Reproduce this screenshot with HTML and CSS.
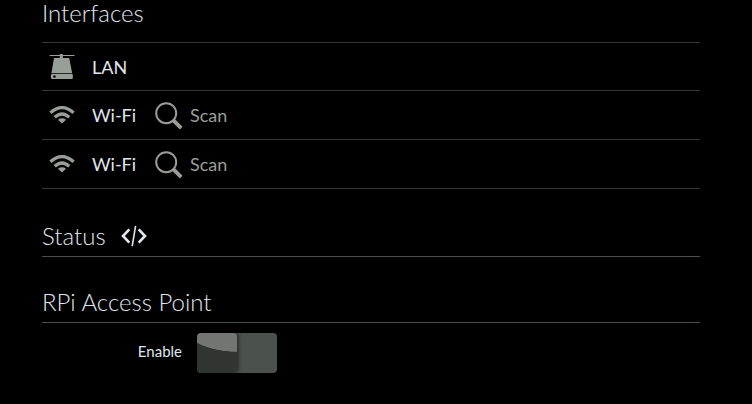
FILE: index.html
```
<!DOCTYPE html>
<html lang="en">
<head>
	<meta charset="UTF-8">
	<title>Network</title>
	<link rel="stylesheet" href="styles.css">
</head>
<body>
	<svg class="defs">
		<symbol id="i-wifi" viewBox="0 0 26 18">
			<path d="M1.4 6.8Q13-3.6 24.6 6.8M5.7 11.3Q13 4.7 20.3 11.3" fill="none" stroke="currentColor" stroke-width="3.2"/>
			<path d="M9 13.7Q13 10.8 17 13.7L13 17.5z" fill="currentColor"/>
		</symbol>
		<symbol id="i-search" viewBox="0 0 28 28">
			<circle cx="11.2" cy="11.2" r="10" fill="none" stroke="currentColor" stroke-width="2"/>
			<path d="M18.2 18.2L26.2 26.2" stroke="currentColor" stroke-width="3.8"/>
		</symbol>
	</svg>
	<div class="container">
		<h2 class="first">Interfaces</h2>
		<ul class="entries">
			<li>
				<svg class="lan" viewBox="0 0 26 26"><path d="M.5 1h10.3V0h3v1h11.7v1.1H13.8V4h6.4l3 15.3H2.4L5 4h5.8V2.1H.5z"/><path fill-rule="evenodd" d="M3 20.1h19.8q1 0 1 1v2.8q0 1-1 1H3q-1 0-1-1v-2.8q0-1 1-1zM5.4 21.2a1.3 1.3 0 1 0 .1 0z"/></svg>
				<b>LAN</b>
			</li>
			<li>
				<svg class="wifi"><use href="#i-wifi"/></svg>
				<b>Wi-Fi</b>
				<a class="scan"><svg class="search"><use href="#i-search"/></svg>Scan</a>
			</li>
			<li>
				<svg class="wifi"><use href="#i-wifi"/></svg>
				<b>Wi-Fi</b>
				<a class="scan"><svg class="search"><use href="#i-search"/></svg>Scan</a>
			</li>
		</ul>
		<h2 class="status">Status
			<svg class="code" viewBox="0 0 26 22"><path d="M8.3 4.3L2 11l6.3 6.7M17.7 4.3L24 11l-6.3 6.7"/><path class="slash" d="M14.6.8L11.2 21.2"/></svg>
		</h2>
		<h2 class="ap">RPi Access Point</h2>
		<div class="field">
			<label>Enable</label>
			<div class="switch"><div class="knob"></div></div>
		</div>
	</div>
</body>
</html>
```

FILE: styles.css
```
*{
	margin: 0;
	padding: 0;
	box-sizing: border-box;
}
body{
	background: #000;
	color: #e0e7ee;
	font-family: Lato, "Liberation Sans", sans-serif;
	overflow: hidden;
}
.defs{
	display: none;
}
.container{
	width: 658px;
	margin-left: 42px;
}
h2{
	display: flex;
	align-items: center;
	font-size: 24px;
	font-weight: 300;
	line-height: 30px;
	white-space: nowrap;
	border-bottom: 1px solid #4b514d;
}
.first{
	height: 43px;
	align-items: flex-start;
	line-height: 26px;
	border-color: #363636;
}
.entries{
	list-style: none;
}
.entries li{
	display: flex;
	align-items: center;
	height: 49px;
	padding-left: 7px;
	font-size: 18px;
	border-bottom: 1px solid #363636;
}
.entries li:first-child{
	height: 48px;
}
.entries b{
	font-weight: 400;
	line-height: 24px;
}
.entries svg{
	color: #989e98;
	fill: #989e98;
}
.lan{
	width: 26px;
	height: 26px;
	margin-right: 17px;
}
.wifi{
	width: 26px;
	height: 18px;
	margin-right: 17px;
}
.scan{
	display: flex;
	align-items: center;
	margin-left: 19px;
	color: #989e98;
}
.search{
	width: 28px;
	height: 28px;
	margin-right: 7px;
	margin-top: 1px;
}
.status{
	height: 39px;
	margin-top: 29px;
	padding-bottom: 2px;
}
.code{
	width: 26px;
	height: 22px;
	margin-left: 15px;
	fill: none;
	stroke: #e0e7ee;
	stroke-width: 2.6;
}
.slash{
	stroke-width: 1.6;
}
.ap{
	height: 40px;
	margin-top: 26px;
	padding-bottom: 2px;
}
.field{
	display: flex;
	margin-top: 10px;
}
.field label{
	width: 140px;
	margin-right: 15px;
	font-size: 15px;
	line-height: 36px;
	text-align: right;
}
.switch{
	width: 80px;
	height: 40px;
	background: #4b514d;
	border-radius: 4px;
	overflow: hidden;
}
.knob{
	width: 40px;
	height: 40px;
	border-radius: 4px;
	background: radial-gradient(ellipse 64px 40px at 40px -21px, #737573 98.5%, #303531 100%);
	box-shadow: 1px 0 4px rgba(0,0,0,0.6);
}
```
